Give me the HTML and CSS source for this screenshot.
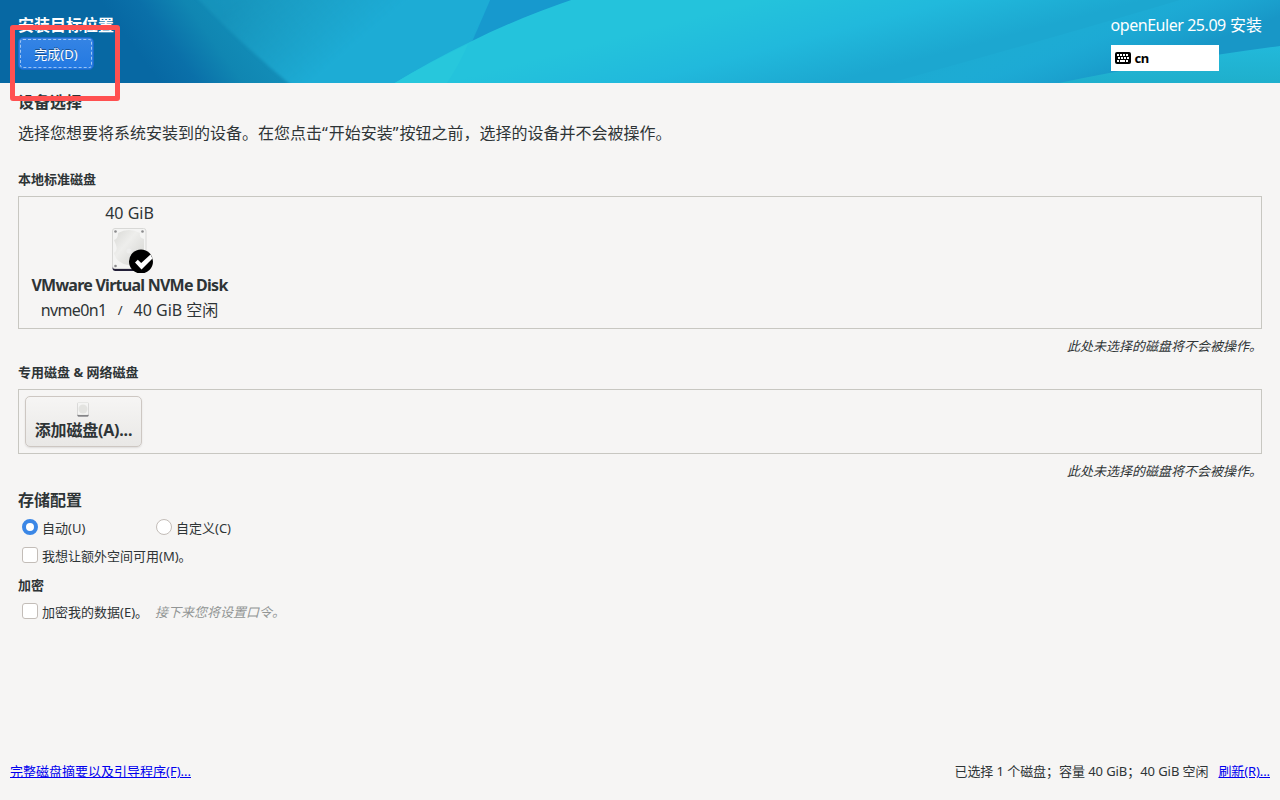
FILE: index.html
```html
<!DOCTYPE html>
<html lang="zh-CN">
<head>
  <meta charset="UTF-8" />
  <title>openEuler 25.09 安装</title>
  <link rel="stylesheet" href="styles.css">
</head>
<body>

<div class="page">
  <!-- Banner -->
  <header class="banner">
    <svg class="banner-bg" viewBox="0 0 1280 83" preserveAspectRatio="none">
      <defs>
        <linearGradient id="base" x1="100" y1="0" x2="349" y2="-180" gradientUnits="userSpaceOnUse">
          <stop offset="0" stop-color="#0768a3" />
          <stop offset="0.1" stop-color="#0a70a9" />
          <stop offset="0.22" stop-color="#1086b2" />
          <stop offset="0.5" stop-color="#1797c0" />
          <stop offset="1" stop-color="#1da8d6" />
        </linearGradient>
        <linearGradient id="middle" x1="240" y1="0" x2="310" y2="83" gradientUnits="userSpaceOnUse">
          <stop offset="0" stop-color="#1c9fc4" stop-opacity="0.4" />
          <stop offset="1" stop-color="#1dacd5" />
        </linearGradient>
        <linearGradient id="wave" x1="760" y1="0" x2="785" y2="95" gradientUnits="userSpaceOnUse">
          <stop offset="0" stop-color="#24c3dc" />
          <stop offset="0.5" stop-color="#21b9dc" />
          <stop offset="1" stop-color="#1ca7d0" />
        </linearGradient>
        <linearGradient id="shade" x1="1080" y1="0" x2="1110" y2="80" gradientUnits="userSpaceOnUse">
          <stop offset="0" stop-color="#20b9dc" stop-opacity="0" />
          <stop offset="0.5" stop-color="#1dabd6" stop-opacity="0.7" />
          <stop offset="1" stop-color="#1897c7" />
        </linearGradient>
        <linearGradient id="corner" x1="0" y1="46" x2="0" y2="83" gradientUnits="userSpaceOnUse">
          <stop offset="0" stop-color="#22b9da" />
          <stop offset="1" stop-color="#1fafcc" />
        </linearGradient>
        <filter id="blend" x="-10%" y="-20%" width="120%" height="140%" color-interpolation-filters="sRGB">
          <feGaussianBlur stdDeviation="1.5" />
        </filter>
        <filter id="edge" color-interpolation-filters="sRGB">
          <feGaussianBlur stdDeviation="0.6" />
        </filter>
      </defs>
      <rect width="1280" height="83" fill="url(#base)" />
      <path d="M185-15Q235 40 303 95H447L472 42L500-15Z" fill="url(#middle)" filter="url(#blend)" />
      <path d="M491-2H582L472 42Z" fill="#1799ce" filter="url(#edge)" />
      <path d="M390 86Q430 61 472 41Q520 17 580-3H1290V90H390Z" fill="url(#wave)" filter="url(#edge)" />
      <path d="M392 84.500Q430 62 468 44Q461 62 446 84.500Z" fill="#27c7dc" filter="url(#edge)" />
      <path d="M890 83Q1070 33 1180 0H1280V83Z" fill="url(#shade)" />
      <path d="M1059 83Q1160 62 1280 46V83Z" fill="url(#corner)" />
    </svg>

    <div class="banner-left">
      <h1>安装目标位置</h1>
      <button class="done-btn">完成(D)</button>
    </div>

    <div class="banner-right">
      <div class="product"><span class="latin">openEuler 25.09</span> 安装</div>
      <div class="keyboard">
        <svg width="16" height="12" viewBox="0 0 16 12">
          <rect width="16" height="12" rx="2" fill="#000" />
          <path d="M2 2h2v2H2zM5 2h2v2H5zM8 2h2v2H8zM11 2h2v2h-2zM3 5h2v2H3zM6 5h2v2H6zM9 5h2v2H9zM12 5h2v2h-2zM2 8h2v2H2zM5 8h5v2H5zM11 8h2v2h-2z" fill="#fff" />
        </svg>
        <span>cn</span>
      </div>
    </div>

    <div class="highlight"></div>
  </header>

  <!-- Content -->
  <main class="content">
    <h2>设备选择</h2>
    <p class="intro">选择您想要将系统安装到的设备。在您点击<span class="quote">“</span>开始安装<span class="quote">”</span>按钮之前，选择的设备并不会被操作。</p>

    <h3 class="local-title">本地标准磁盘</h3>
    <div class="disk-box">
      <div class="disk">
        <div class="disk-size">40 GiB</div>
        <svg class="disk-icon" width="48" height="48" viewBox="0 0 48 48">
          <defs>
            <linearGradient id="platter" x1="0" y1="0" x2="1" y2="1">
              <stop offset="0" stop-color="#d9d9d6" />
              <stop offset="0.4" stop-color="#eeeeec" />
              <stop offset="1" stop-color="#d2d2cf" />
            </linearGradient>
          </defs>
          <rect x="6.500" y="5" width="33.500" height="41" rx="3" fill="#231f38" />
          <rect x="6.500" y="3.500" width="33.500" height="40" rx="2.500" fill="#f4f4f3" stroke="#d8d8d6" />
          <path d="M12 8Q23 2 34 8Q33 13 38 14V22Q38 39 22 40Q10 38 8 28Q12 26 10 20L8 15Q12 14 12 8Z" fill="url(#platter)" />
          <circle cx="23" cy="26" r="2.500" fill="#eeeeed" />
          <g fill="#8a8a8c">
            <circle cx="9.500" cy="6.500" r="1.300" />
            <circle cx="36.500" cy="6.500" r="1.300" />
            <circle cx="9.500" cy="41" r="1.300" />
          </g>
          <circle cx="35" cy="36.500" r="12" fill="#000" />
          <path d="M29 37.500L31.800 34.700L35.200 38L44.500 29.500L46.500 33.500L35.500 44.500Z" fill="#fff" />
        </svg>
        <div class="disk-name">VMware Virtual NVMe Disk</div>
        <div class="disk-info">
          <span class="device">nvme0n1</span>
          <span class="slash">/</span>
          <span>40 GiB 空闲</span>
        </div>
      </div>
    </div>
    <p class="note">此处未选择的磁盘将不会被操作。</p>

    <h3>专用磁盘 &amp; 网络磁盘</h3>
    <div class="disk-box special">
      <button class="add-btn">
        <svg width="12" height="15" viewBox="0 0 12 15">
          <rect x="0.500" y="1" width="11" height="13.500" rx="1" fill="#55555a" />
          <rect x="0.500" y="0.500" width="11" height="12.500" rx="1" fill="#f4f4f3" stroke="#e0e0dd" stroke-width="0.700" />
          <circle cx="6" cy="7" r="4.500" fill="#e3e3e0" />
        </svg>
        <span>添加磁盘(A)...</span>
      </button>
    </div>
    <p class="note">此处未选择的磁盘将不会被操作。</p>

    <h2>存储配置</h2>
    <div class="option-row radios">
      <label class="option"><span class="radio checked"></span>自动(U)</label>
      <label class="option"><span class="radio"></span>自定义(C)</label>
    </div>
    <div class="option-row reclaim">
      <label class="option"><span class="check"></span>我想让额外空间可用(M)。</label>
    </div>

    <h3 class="encrypt-title">加密</h3>
    <div class="option-row encrypt">
      <label class="option"><span class="check"></span>加密我的数据(E)。</label>
      <em>接下来您将设置口令。</em>
    </div>
  </main>

  <!-- Footer -->
  <footer class="footer">
    <a href="#">完整磁盘摘要以及引导程序(F)...</a>
    <div class="summary">
      <span class="status">已选择 1 个磁盘；容量 40 GiB；40 GiB 空闲</span>
      <a href="#">刷新(R)...</a>
    </div>
  </footer>
</div>

</body>
</html>
```
FILE: styles.css
```css
* {
  box-sizing: border-box;
}

body {
  margin: 0;
  font-family: 'Noto Sans', 'Noto Sans CJK SC', sans-serif;
  font-size: 13px;
  line-height: 20px;
  color: #2e3436;
  background-color: #f6f5f4;
}

.page {
  height: 100vh;
  display: flex;
  flex-direction: column;
  overflow: hidden;
}

h1, h2, h3, p {
  margin: 0;
}

h1, h2 {
  font-size: 16px;
}

h3 {
  font-size: 13px;
  margin-top: 6px;
}

h2 {
  margin-top: 9px;
}

button {
  font-family: inherit;
}

/* Banner */
.banner {
  position: relative;
  height: 83px;
  flex: none;
  display: flex;
  justify-content: space-between;
  padding: 15px 18px 0;
  color: white;
}

.banner-bg {
  position: absolute;
  top: 0;
  left: 0;
  width: 100%;
  height: 100%;
}

.banner-left,
.banner-right {
  position: relative;
}

.done-btn {
  display: block;
  width: 76px;
  height: 33px;
  margin: 2px 0 0;
  padding: 0;
  font-size: 13px;
  color: white;
  text-shadow: 0 -1px rgba(0, 0, 0, 0.4);
  background: linear-gradient(#3584e4, #2379e2);
  border: 1px solid #1b6acb;
  border-radius: 5px;
  outline: 1px dashed rgba(255, 255, 255, 0.55);
  outline-offset: -3px;
}

.product {
  font-size: 16px;
}

.latin {
  letter-spacing: -0.45px;
}

.keyboard {
  display: flex;
  align-items: center;
  gap: 4px;
  width: 108px;
  height: 26px;
  margin-top: 10px;
  padding-left: 4px;
  background: white;
  color: black;
  font-weight: bold;
  letter-spacing: -0.5px;
}

/* Red frame around the done button */
.highlight {
  position: absolute;
  left: 10px;
  top: 25px;
  width: 110px;
  height: 76px;
  border: 5px solid #ff5050;
  border-radius: 3px;
  z-index: 2;
}

/* Content */
.content {
  flex: 1;
  padding: 0 18px;
}

.intro {
  font-size: 16px;
  margin-top: 11px;
}

.quote {
  letter-spacing: 1px;
}

.local-title {
  margin-top: 26px;
}

.disk-box {
  height: 133px;
  margin-top: 7px;
  padding: 6px;
  border: 1px solid #c8c7c1;
}

.disk-box.special {
  height: 65px;
}

.disk {
  width: 209px;
  display: flex;
  flex-direction: column;
  align-items: center;
  font-size: 16px;
}

.disk-icon {
  margin: 2px 0;
}

.disk-name {
  font-weight: bold;
  letter-spacing: -0.75px;
  white-space: nowrap;
}

.disk-info {
  display: flex;
  gap: 12px;
  margin-top: 5px;
}

.device {
  letter-spacing: -0.6px;
}

.slash {
  font-size: 13px;
  margin: 0 -1px;
}

.note {
  margin-top: 7px;
  text-align: right;
  font-style: italic;
}

.add-btn {
  display: flex;
  flex-direction: column;
  align-items: center;
  width: 117px;
  height: 51px;
  padding: 5px 0 0;
  font-size: 16px;
  font-weight: bold;
  line-height: 20px;
  letter-spacing: -0.2px;
  color: #2e3436;
  background: linear-gradient(#f6f5f4, #e9e8e6);
  border: 1px solid #cdc7c2;
  border-radius: 5px;
  box-shadow: 0 1px 2px rgba(0, 0, 0, 0.1);
}

.add-btn svg {
  margin-right: 2px;
}

.add-btn span {
  margin-top: 3px;
}

.option-row {
  display: flex;
  padding-left: 4px;
}

.option {
  display: flex;
  align-items: flex-end;
  gap: 4px;
}

.radios {
  margin-top: 8px;
}

.radios .option {
  width: 134px;
}

.reclaim {
  margin-top: 8px;
}

.encrypt-title {
  margin-top: 9px;
}

.encrypt {
  margin-top: 7px;
  gap: 7px;
}

.encrypt em {
  color: #929595;
}

.radio,
.check {
  width: 16px;
  height: 16px;
  margin-bottom: 3px;
  background: white;
  border: 1px solid #c3bdb8;
  border-radius: 3px;
}

.radio {
  border-radius: 50%;
}

.radio.checked {
  border: 4px solid #3b87e6;
}

/* Footer */
.footer {
  display: flex;
  justify-content: space-between;
  padding: 0 10px 19px;
}

.footer a {
  color: #0000ee;
}

.summary {
  display: flex;
  gap: 10px;
}

.status {
  letter-spacing: -0.07px;
}

.summary a {
  letter-spacing: -0.1px;
}
```
